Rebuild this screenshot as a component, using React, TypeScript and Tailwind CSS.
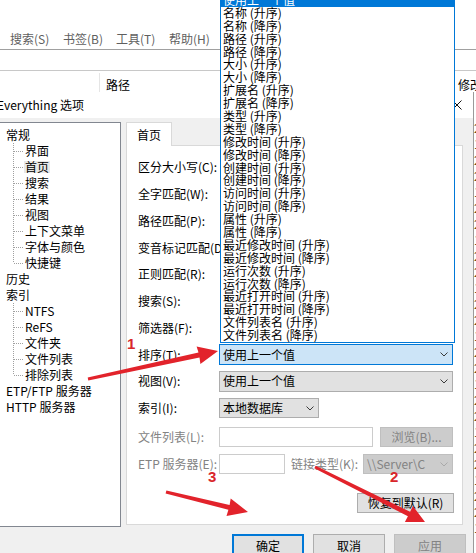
import React from "react";

const sortOptions = [
  "使用上一个值",
  "名称 (升序)",
  "名称 (降序)",
  "路径 (升序)",
  "路径 (降序)",
  "大小 (升序)",
  "大小 (降序)",
  "扩展名 (升序)",
  "扩展名 (降序)",
  "类型 (升序)",
  "类型 (降序)",
  "修改时间 (升序)",
  "修改时间 (降序)",
  "创建时间 (升序)",
  "创建时间 (降序)",
  "访问时间 (升序)",
  "访问时间 (降序)",
  "属性 (升序)",
  "属性 (降序)",
  "最近修改时间 (升序)",
  "最近修改时间 (降序)",
  "运行次数 (升序)",
  "运行次数 (降序)",
  "最近打开时间 (升序)",
  "最近打开时间 (降序)",
  "文件列表名 (升序)",
  "文件列表名 (降序)",
];

const treeGroups = [
  { label: "常规", children: ["界面", "首页", "搜索", "结果", "视图", "上下文菜单", "字体与颜色", "快捷键"] },
  { label: "历史", children: [] as string[] },
  { label: "索引", children: ["NTFS", "ReFS", "文件夹", "文件列表", "排除列表"] },
  { label: "ETP/FTP 服务器", children: [] as string[] },
  { label: "HTTP 服务器", children: [] as string[] },
];

const plainLabels = [
  "区分大小写(C):",
  "全字匹配(W):",
  "路径匹配(P):",
  "变音标记匹配(D):",
  "正则匹配(R):",
  "搜索(S):",
  "筛选器(F):",
];

function Chevron({ disabled }: { disabled?: boolean }) {
  return (
    <svg width="8" height="5" viewBox="0 0 8 5" className="shrink-0">
      <path d="M0.5 0.5 L4 4 L7.5 0.5" fill="none" stroke={disabled ? "#a9a9a9" : "#3a3a3a"} strokeWidth="1" />
    </svg>
  );
}

function Connector({ last }: { last: boolean }) {
  return (
    <svg width="12" height="16" viewBox="0 0 12 16" className="shrink-0">
      <line x1="0.5" y1="0" x2="0.5" y2={last ? 8 : 16} stroke="#a0a0a0" strokeDasharray="1 1" />
      <line x1="1" y1="8.5" x2="11" y2="8.5" stroke="#a0a0a0" strokeDasharray="1 1" />
    </svg>
  );
}

function Tree() {
  return (
    <div className="w-[122px] h-[405px] -ml-[1px] bg-white border border-[#828790] pt-[4px] shrink-0">
      {treeGroups.map((g) => (
        <div key={g.label}>
          <div className="h-[16px] flex items-center pl-[6px] whitespace-nowrap">{g.label}</div>
          {g.children.map((c, i) => (
            <div key={c} className="h-[16px] flex items-center pl-[13px] whitespace-nowrap">
              <Connector last={i === g.children.length - 1} />
              <span className={c === "首页" && g.label === "常规" ? "bg-[#e8e8e8] px-[1px] -ml-[1px]" : ""}>{c}</span>
            </div>
          ))}
        </div>
      ))}
    </div>
  );
}

function OptionsPanel() {
  return (
    <div className="ml-[5px] w-[337px] flex flex-col">
      <div className="flex">
        <div className="relative z-10 w-[46px] h-[24px] -mb-[1px] bg-white border border-b-0 border-[#d9d9d9] flex items-center justify-center pt-[1px]">
          首页
        </div>
      </div>
      <div className="h-[380px] bg-white border border-[#d9d9d9] pt-[8px] pl-[11px] pr-[8px] flex flex-col">
        {plainLabels.map((l) => (
          <div key={l} className="h-[26.75px] flex items-center whitespace-nowrap">
            {l}
          </div>
        ))}
        <div className="h-[26.75px] flex items-center whitespace-nowrap">
          <span className="w-[81px] shrink-0">排序(T):</span>
          <div className="w-[234px] h-[21px] flex items-center justify-between pl-[3px] pr-[4px] bg-[#cce4f7] border border-[#0078d7]">
            使用上一个值
            <Chevron />
          </div>
        </div>
        <div className="h-[26.75px] flex items-center whitespace-nowrap">
          <span className="w-[81px] shrink-0">视图(V):</span>
          <div className="w-[234px] h-[21px] flex items-center justify-between pl-[3px] pr-[4px] bg-[#e1e1e1] border border-[#adadad]">
            使用上一个值
            <Chevron />
          </div>
        </div>
        <div className="h-[26.75px] flex items-center whitespace-nowrap">
          <span className="w-[81px] shrink-0">索引(I):</span>
          <div className="w-[100px] h-[20px] flex items-center justify-between pl-[3px] pr-[4px] bg-[#e1e1e1] border border-[#adadad]">
            本地数据库
            <Chevron />
          </div>
        </div>
        <div className="h-[30px] flex items-center whitespace-nowrap text-[#838383]">
          <span className="w-[81px] shrink-0">文件列表(L):</span>
          <div className="w-[154px] h-[20px] bg-white border border-[#cccccc]" />
          <div className="ml-[7px] w-[73px] h-[20px] flex items-center justify-center bg-[#cccccc] border border-[#bfbfbf]">
            浏览(B)...
          </div>
        </div>
        <div className="h-[25px] flex items-center whitespace-nowrap text-[#838383]">
          <span className="w-[81px] shrink-0">ETP 服务器(E):</span>
          <div className="w-[66px] h-[20px] bg-white border border-[#cccccc]" />
          <span className="ml-[6px] w-[72px]">链接类型(K):</span>
          <div className="w-[90px] h-[20px] flex items-center justify-between pl-[3px] pr-[4px] bg-[#cccccc] border border-[#bfbfbf]">
            {"\\\\Server\\C"}
            <Chevron disabled />
          </div>
        </div>
        <div className="mt-[16.5px] flex justify-end">
          <div className="w-[97px] h-[20px] flex items-center justify-center bg-[#e1e1e1] border border-[#adadad]">
            恢复到默认(R)
          </div>
        </div>
      </div>
    </div>
  );
}

function OptionsDialog() {
  return (
    <div className="w-[474px] h-full flex flex-col border-r border-[#9a9a9a] shrink-0">
      <div className="h-[26px] bg-white flex items-center justify-between pr-[11px]">
        <span className="-ml-[3px] whitespace-nowrap">Everything 选项</span>
        <svg width="10" height="10" viewBox="0 0 10 10">
          <path d="M0.5 0.5 L9.5 9.5 M9.5 0.5 L0.5 9.5" stroke="#111" strokeWidth="1" />
        </svg>
      </div>
      <div className="flex-1 bg-[#f0f0f0] flex flex-col overflow-hidden">
        <div className="flex pt-[4px]">
          <Tree />
          <OptionsPanel />
        </div>
        <div className="mt-[7px] flex justify-end gap-[9px] pr-[7px]">
          <div className="w-[72px] h-[23px] flex items-center justify-center bg-[#e1e1e1] border-2 border-[#0078d7]">
            确定
          </div>
          <div className="w-[72px] h-[23px] flex items-center justify-center bg-[#e1e1e1] border border-[#adadad]">
            取消
          </div>
          <div className="w-[72px] h-[23px] flex items-center justify-center bg-[#cccccc] border border-[#bfbfbf] text-[#838383]">
            应用
          </div>
        </div>
      </div>
    </div>
  );
}

function MainWindowTop() {
  return (
    <div className="h-[92px] flex flex-col">
      <div className="h-[28px]" />
      <div className="h-[22px] flex items-center pl-[10px] text-[#5f5f5f] border-b border-[#a0a0a0]">
        {["搜索(S)", "书签(B)", "工具(T)", "帮助(H)"].map((m) => (
          <span key={m} className="w-[53px] whitespace-nowrap">
            {m}
          </span>
        ))}
      </div>
      <div className="h-[21px] border-b border-[#c8c8c8]" />
      <div className="h-[21px] flex items-end">
        <div className="w-[100px] h-[19px] border-r border-[#e5e5e5]" />
        <div className="flex-1 pl-[6px] pb-[1px]">路径</div>
        <div className="w-[20px] pl-[2px] pb-[1px] whitespace-nowrap overflow-hidden">修改</div>
      </div>
    </div>
  );
}

function SortList() {
  return (
    <div className="absolute left-[220px] top-[-7px] w-[235px] bg-white border border-[#0078d7] z-20">
      {sortOptions.map((o, i) => (
        <div
          key={o}
          className={
            "h-[12.9px] leading-[12.9px] pl-[2px] whitespace-nowrap " +
            (i === 0 ? "bg-[#0078d7] text-white" : "text-black")
          }
        >
          {o}
        </div>
      ))}
    </div>
  );
}

function Annotations() {
  return (
    <svg className="absolute left-0 top-0 z-30 pointer-events-none" width="476" height="553" viewBox="0 0 476 553">
      <g fill="#e2232b">
        <polygon points="88.3,380.5 199.5,357.4 200.4,364 218,351 196.6,346.4 198.5,352.6 87.7,377.5" />
        <polygon points="165.6,493.5 228.4,509.8 226.5,516 248,512 230.7,498.6 229.6,505 166.4,490.5" />
        <polygon points="314.3,468.3 407.9,516.2 404.9,522 425,522 412.9,506 410.1,511.8 315.7,465.7" />
      </g>
      <g fill="#d9262b" fontFamily="'Liberation Sans', Arial, sans-serif" fontWeight="bold" fontSize="15">
        <text x="127" y="349">1</text>
        <text x="390" y="482">2</text>
        <text x="208" y="482">3</text>
      </g>
    </svg>
  );
}

export default function App() {
  return (
    <div className="relative w-[476px] h-[553px] overflow-hidden bg-white text-[12px] leading-none text-black font-['Noto_Sans_CJK_SC','Noto_Sans',sans-serif]">
      <MainWindowTop />
      <div className="flex h-[461px]">
        <OptionsDialog />
        <div className="w-[2px] overflow-hidden bg-white text-[#6b4a1e] pt-[30px]">
          {Array.from({ length: 26 }).map((_, i) => (
            <div key={i} className="h-[16px]">
              {i % 3 === 1 ? "1" : "2"}
            </div>
          ))}
        </div>
      </div>
      <SortList />
      <Annotations />
    </div>
  );
}
